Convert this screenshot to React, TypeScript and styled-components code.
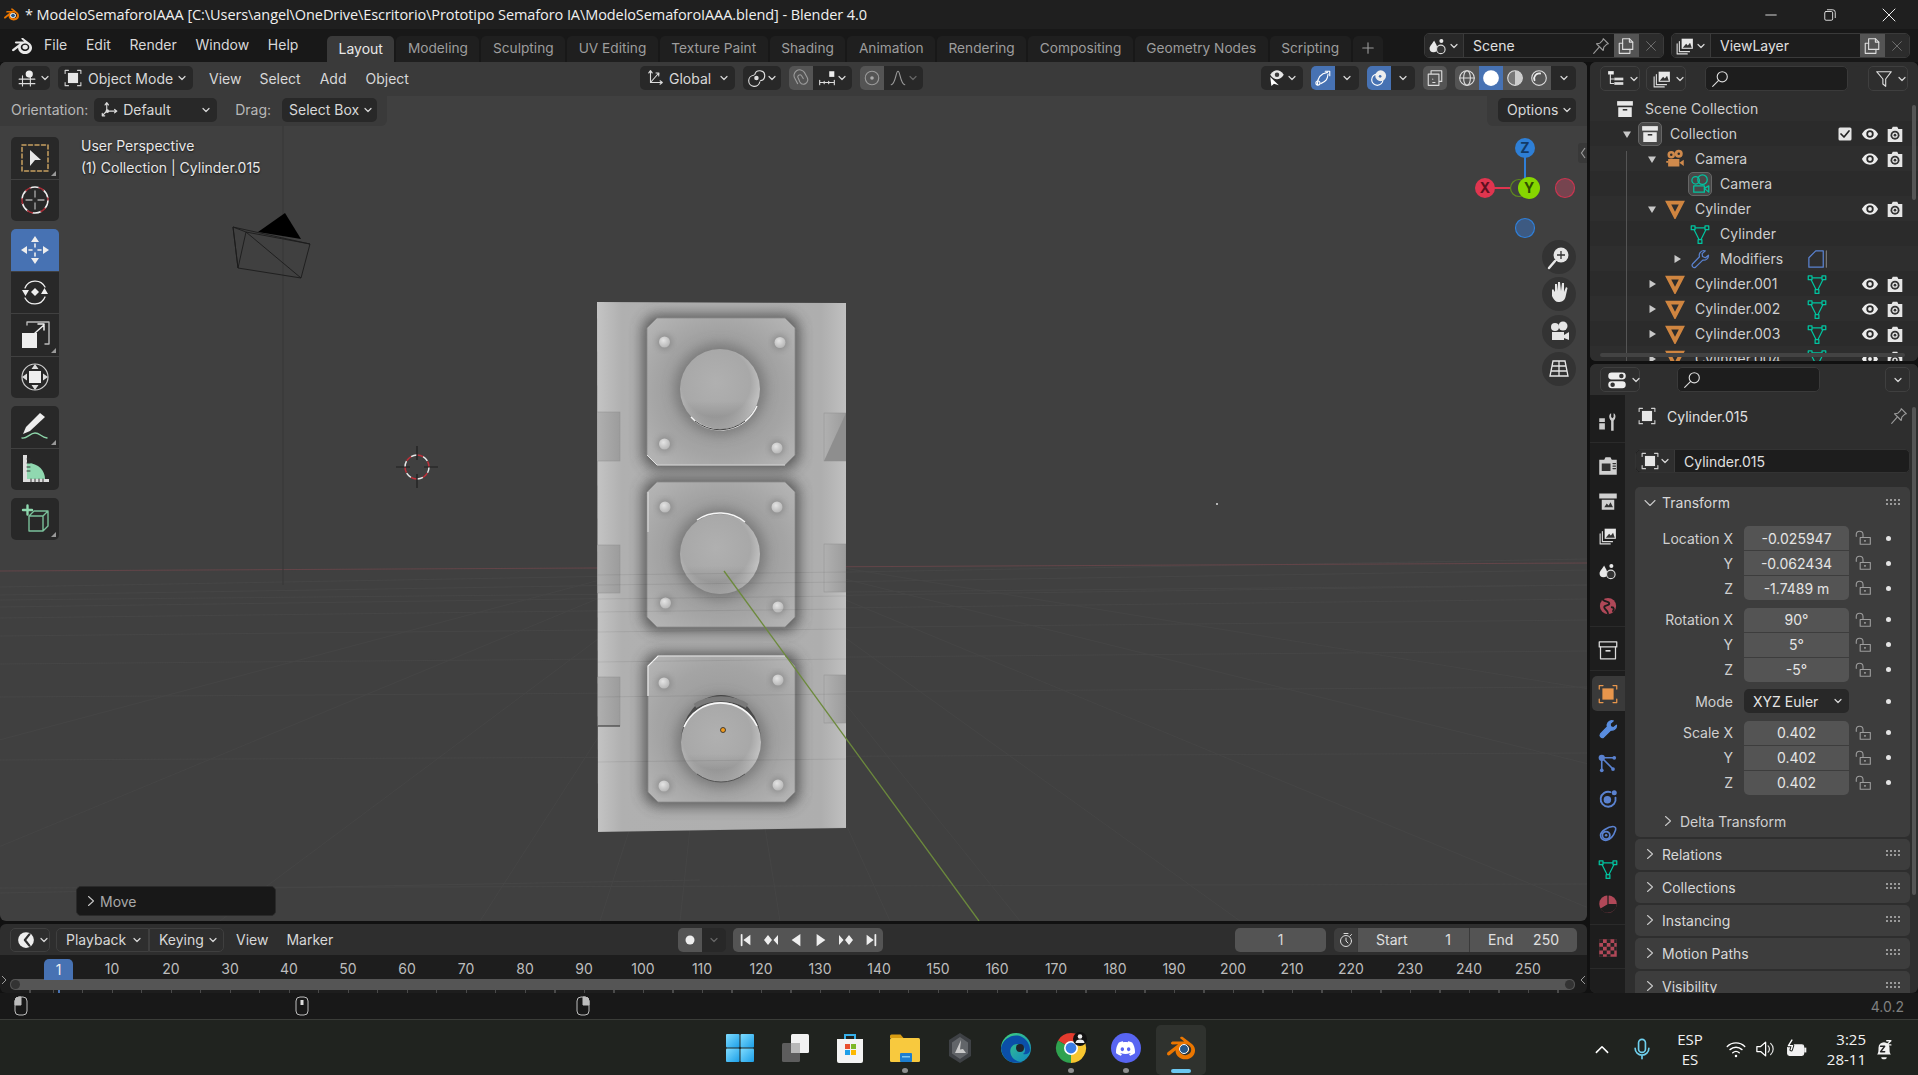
import React from "react";
import styled, { createGlobalStyle } from "styled-components";
import { SiBlender, SiDiscord } from "react-icons/si";

const Global = createGlobalStyle`
  html, body { margin: 0; padding: 0; background: #111; overflow: hidden; }
  body { font-family: Inter, "Noto Sans", sans-serif; }
  #root { width: 1918px; height: 1075px; }
  * { box-sizing: border-box; }
`;

const Page = styled.div`width:1918px;height:1075px;display:grid;grid-template-rows:29px 33px 931px 26px 1fr;background:#111;color:#d9d9d9;font-size:14px;overflow:hidden;`;

/* ---------- generic icon helper ---------- */
const Glyph = styled.svg`display:block;flex-shrink:0;`;
type GP = { s?: number; v?: string; children?: React.ReactNode };
const G = ({ s = 18, v = "0 0 16 16", children }: GP) => <Glyph width={s} height={s} viewBox={v} fill="none" stroke="#dcdcdc" strokeWidth="1" strokeLinecap="round" strokeLinejoin="round">{children}</Glyph>;
const Caret = ({ dim }: { dim?: boolean }) => <Glyph width="10" height="10" viewBox="0 0 10 10" fill="none" stroke={dim ? "#666" : "#d8d8d8"} strokeWidth="1.2" strokeLinecap="round" strokeLinejoin="round"><path d="M2 3.5 5 6.5 8 3.5" /></Glyph>;

const ObjIcon = ({ c = "#e6e6e6", s = 18 }: { c?: string; s?: number }) => <G s={s}><path d="M1 4V1.2h3M12 1.2h3V4M15 12v2.8h-3M4 14.800H1V12" stroke={c === "#e6e6e6" ? "#cfcfcf" : c} /><rect x="3.500" y="3.500" width="9" height="9" fill={c} stroke="none" /></G>;
const ViewEditor = () => <G><path d="M1 9h14M1 13h14M4 6v9M11 7v8" /><circle cx="10" cy="4.500" r="3.200" fill="#eee" stroke="none" /></G>;
const OrientIcon = () => <G><path d="M6 8V2M4.500 3.500 6 1.500 7.500 3.500M8 9h6M13 7.500 15 9l-2 1.500M5 10l-3 3M2 11v2.200h2.200" /><circle cx="6.500" cy="9" r="1.600" fill="#ddd" stroke="none" /></G>;
const GlobalIcon = () => <G><path d="M4 2v10h10M2.500 3.500 4 1.500l1.500 2M12.500 10.500 14.500 12l-2 1.500M4 12l7-8M9 3.500l2.500.2-.2 2.500" /></G>;
const PivotIcon = () => <G><path d="M5 5.500a5 5 0 1 0 5.500 6" /><path d="M6 5a4.500 4.500 0 1 1 5 5.500" /><circle cx="7.500" cy="8" r="2" fill="#ddd" stroke="none" /></G>;
const Magnet = () => <G><path d="M5 13 2.600 8.500A5 5 0 0 1 11 3l2.500 4.500c1 2 .5 4.500-1.500 5.500s-4 .3-5-1.500L5.500 8A1.800 1.800 0 0 1 8.500 6l1.500 2.500" stroke="#9a9a9a" /></G>;
const SnapInc = () => <G><path d="M1.500 10v4M1.500 12h13M14.500 10v4M5.500 11v2M9.500 11v2" /><rect x="10" y="2" width="4.500" height="5" fill="#eee" stroke="none" /></G>;
const PropDot = () => <G><circle cx="8" cy="8" r="6" stroke="#9a9a9a" /><circle cx="8" cy="8" r="1.600" fill="#aaa" stroke="none" /></G>;
const Falloff = () => <G><path d="M2 14C6 13 6 2 8 2s2 11 6 12" stroke="#9a9a9a" /></G>;
const VisIcon = () => <G><path d="M2 5c2-3 4-4 6-4s4 1 6 4c-2 3-4 4-6 4s-4-1-6-4z" fill="#e6e6e6" stroke="none" /><circle cx="8" cy="5" r="2" fill="#3a3a3a" stroke="none" /><path d="M2 7l1 8 2.300-2 4.300 1.500L5 10z" fill="#fff" stroke="none" /></G>;
const GizmoIcon = () => <G><path d="M3 14C3 8 6 4 12 3M6 13c5-2 6-4 6.500-8.500M10 2h4v4" stroke="#fff" /><circle cx="3.500" cy="12.500" r="1.800" stroke="#fff" /></G>;
const OverlayIcon = () => <G><circle cx="6.500" cy="9.500" r="5" stroke="#fff" /><circle cx="9.500" cy="6" r="4.800" fill="#eee" stroke="none" /><circle cx="9" cy="6.500" r="1.200" fill="#4772b3" stroke="none" /></G>;
const XrayIcon = () => <G><rect x="2" y="4.500" width="9.500" height="10" stroke="#ddd" /><path d="M4.500 4V1.500H14V11h-2" stroke="#ddd" /><path d="M6 9h.01M6 12h2" /></G>;
const ShadeWire = () => <G><circle cx="8" cy="8" r="6.500" /><ellipse cx="8" cy="8" rx="3" ry="6.500" /><path d="M1.500 8h13" /></G>;
const ShadeSolid = () => <G><circle cx="8" cy="8" r="7" fill="#fff" stroke="none" /></G>;
const ShadeMat = () => <G><circle cx="8" cy="8" r="6.500" fill="#777" /><path d="M8 1.500A6.500 6.500 0 0 1 8 14.500z" fill="#ccc" stroke="none" /></G>;
const ShadeRender = () => <G><circle cx="8" cy="8" r="6.500" fill="#555" /><path d="M4 10a4.500 4.500 0 0 1 5-6" stroke="#eee" strokeWidth="1.600" /></G>;
const OutlinerType = () => <G><rect x="1" y="1" width="5" height="3" fill="#eee" stroke="none" /><path d="M3 4v8M3 8h3M3 12h3" /><rect x="6.500" y="6.800" width="8" height="2.400" fill="#ddd" stroke="none" /><rect x="6.500" y="10.800" width="8" height="2.400" fill="#ddd" stroke="none" /></G>;
const LayerIcon = () => <G><path d="M1 6v9h9M3 4v9h9" /><rect x="5" y="1.500" width="10" height="9" fill="#e8e8e8" stroke="none" /><path d="M6 9.500 9 6l1.500 1.500L12.500 5 14 9.500z" fill="#333" stroke="none" /></G>;
const SearchIcon = () => <G><circle cx="10" cy="6" r="4.500" /><path d="M6.800 9.200 1.500 14.500" /></G>;
const FilterIcon = () => <G><path d="M1.500 1.500h13L9.500 8v6.500L7 12.500V8z" /></G>;
const SceneIcon = () => <G><path d="M4.500 3C6 6 7.500 8 7.500 10a3.500 3.500 0 0 1-7 0C.5 8 3 6 4.500 3z" fill="#e8e8e8" stroke="none" /><circle cx="10.500" cy="11" r="3.800" fill="#333" /><circle cx="11" cy="3.500" r="1.800" fill="#e8e8e8" stroke="none" /></G>;
const PinIcon = ({ s = 18 }: { s?: number }) => <G s={s}><path d="M10 1.500 14.500 6 13 6.500 10.500 9 10 12 4 6l3-.5L9.500 3zM6 9.500 1.500 14.500" stroke="#999" /></G>;
const CopyIcon = () => <G><path d="M2 5.500h3M2 5.500V14.500h9.500V11" stroke="#ddd" /><path d="M5 1.500h6l3 3v6.500H5z" stroke="#ddd" /><path d="M11 1.500v3h3" stroke="#ddd" /></G>;
const XIcon = () => <G s={14}><path d="M3 3l10 10M13 3 3 13" stroke="#777" /></G>;
const BoxIcon = ({ s = 18 }: { s?: number }) => <G s={s}><rect x="1" y="1" width="14" height="4" fill="#e8e8e8" stroke="none" /><path d="M2 6.500h12V15H2z" fill="#e8e8e8" stroke="none" /><rect x="6" y="8" width="4" height="1.400" fill="#333" stroke="none" /></G>;
const CamObj = ({ c = "#d08a4c" }: { c?: string }) => <G s={20}><circle cx="5" cy="4.500" r="3" fill={c} stroke="none" /><circle cx="11" cy="3.800" r="3.200" fill={c} stroke="none" /><circle cx="5" cy="4.500" r="1" fill="#2b2b2b" stroke="none" /><circle cx="11" cy="3.800" r="1" fill="#2b2b2b" stroke="none" /><rect x="2.500" y="8" width="9" height="6" fill={c} stroke="none" /><path d="M11.500 11 15 8.500v5zM1 9.500h1.500v1.500H1z" fill={c} stroke="none" /></G>;
const CamData = () => <G s={20}><g stroke="#00c4a0"><circle cx="4.500" cy="5" r="3" /><circle cx="10" cy="4.500" r="3.800" /><rect x="3" y="9.500" width="8.500" height="5" /><path d="M11.500 11.500 15 9.500v5z" /></g></G>;
const TriObj = ({ s = 20 }: { s?: number }) => <G s={s}><path d="M2.500 2.800h11L8 13.500z" stroke="#cf8540" strokeWidth="3" strokeLinejoin="miter" /></G>;
const MeshData = ({ s = 20 }: { s?: number }) => <G s={s}><g stroke="#00c4a0"><path d="M2.500 3h11L8 14z" /><rect x="1" y="1.500" width="3" height="3" fill="#2b2b2b" /><rect x="12" y="1.500" width="3" height="3" fill="#2b2b2b" /><rect x="6.500" y="12.500" width="3" height="3" fill="#2b2b2b" /></g></G>;
const Wrench = ({ c = "#5a82d0", s = 20, fill }: { c?: string; s?: number; fill?: boolean }) => <G s={s}><path d="M11 1.200a3.800 3.800 0 0 0-3.400 5L2 12a1.800 1.800 0 0 0 2.500 2.500l5.700-5.600A3.800 3.800 0 0 0 14.800 5L12.300 7 10 6l-.3-2.300 2.500-2.200A4 4 0 0 0 11 1.200z" stroke={c} fill={fill ? c : "none"} /></G>;
const ModPreview = () => <G s={20}><path d="M1.500 14.500V7L7 1.500h6v13z" stroke="#5a82d0" /><path d="M15.500 1.500v13" stroke="#777" /></G>;
const EyeIcon = () => <G s={18}><path d="M.800 8c2-3.800 4.500-5 7.200-5s5.200 1.200 7.200 5c-2 3.800-4.500 5-7.200 5S2.800 11.800.800 8z" fill="#ececec" stroke="none" /><circle cx="8" cy="8" r="3.300" fill="#2b2b2b" stroke="none" /><circle cx="8" cy="8" r="1.700" fill="#ececec" stroke="none" /></G>;
const RenderCam = () => <G s={18}><path d="M1.500 3.500h3.500L6 1.500h4l1 2h3.500V15h-13z" fill="#e6e6e6" stroke="none" /><circle cx="8" cy="9" r="4" fill="#333" stroke="none" /><circle cx="8" cy="9" r="2.400" fill="#e6e6e6" stroke="none" /><circle cx="8" cy="9" r="1.200" fill="#333" stroke="none" /></G>;
const CheckBox = () => <G s={16}><rect x="1.500" y="1.500" width="13" height="13" rx="1.500" fill="#e4e4e4" stroke="none" /><path d="M4 8l3 3 5-6" stroke="#222" strokeWidth="1.700" /></G>;
const Lock = () => <G s={18}><path d="M2 6.500V5a3 3 0 0 1 6 0v2.500" stroke="#9c9c9c" /><rect x="5.500" y="7.500" width="9" height="6" stroke="#9c9c9c" /><rect x="9" y="9.800" width="1.500" height="1.500" fill="#9c9c9c" stroke="none" /></G>;
const Arrow = ({ open }: { open?: boolean }) => <Glyph width="10" height="10" viewBox="0 0 10 10"><path d={open ? "M1 2.500h8L5 9z" : "M2.500 1 9 5l-6.500 4z"} fill="#c8c8c8" /></Glyph>;
const ChevR = () => <Glyph width="12" height="12" viewBox="0 0 12 12" fill="none" stroke="#c8c8c8" strokeWidth="1.100" strokeLinecap="round" strokeLinejoin="round"><path d="M3.500 1.500 8.500 6l-5 4.500" /></Glyph>;
const ChevD = () => <Glyph width="12" height="10" viewBox="0 0 12 10" fill="none" stroke="#c8c8c8" strokeWidth="1.100" strokeLinecap="round" strokeLinejoin="round"><path d="M1 2.500 6 7.500l5-5" /></Glyph>;
const Grip = () => <Glyph width="15" height="8" viewBox="0 0 15 8" fill="#9a9a9a"><path d="M0 0h2v2H0zM4 0h2v2H4zM8 0h2v2H8zM12 0h2v2h-2zM0 4h2v2H0zM4 4h2v2H4zM8 4h2v2H8zM12 4h2v2h-2z" /></Glyph>;

/* ---------- title + top bar ---------- */
const TitleBar = styled.div`background:#1f1f1f;display:flex;align-items:center;padding-left:4px;`;
const TitleText = styled.div`font-family:"Open Sans","Noto Sans",sans-serif;font-size:14.5px;letter-spacing:-.08px;color:#f0f0f0;margin-left:6px;white-space:nowrap;`;
const WinBtns = styled.div`margin-left:auto;display:flex;`;
const WinBtn = styled.div`width:59px;height:29px;display:flex;align-items:center;justify-content:center;`;
const LogoWrap = styled.div<{ $s: number }>`position:relative;width:${p => p.$s}px;height:${p => p.$s}px;`;
const LogoIris = styled.div<{ $s: number }>`position:absolute;left:${p => p.$s * .42}px;top:${p => p.$s * .37}px;width:${p => p.$s * .36}px;height:${p => p.$s * .36}px;border-radius:50%;background:#265787;border:${p => p.$s * .07}px solid #fff;`;
const LogoColor = ({ s = 16 }: { s?: number }) => <LogoWrap $s={s}><SiBlender size={s} color="#ea7600" /><LogoIris $s={s} /></LogoWrap>;

const TopBar = styled.div`background:#181818;display:flex;align-items:flex-start;padding-right:8px;`;
const TopLogo = styled.div`width:44px;height:33px;padding-left:12px;display:flex;align-items:center;`;
const Menus = styled.div`display:flex;gap:18.700px;height:33px;align-items:center;width:283px;color:#d8d8d8;padding-bottom:3px;`;
const Tabs = styled.div`display:flex;gap:2px;padding-top:7px;height:33px;align-items:stretch;white-space:nowrap;font-size:13.7px;`;
const Tab = styled.div<{ $on?: boolean; $icon?: boolean }>`padding:0 ${p => p.$icon ? 8 : 11.5}px 2px;display:flex;align-items:center;border-radius:5px 5px 0 0;background:${p => p.$on ? "#3a3a3a" : "#1f1f1f"};color:${p => p.$on ? "#e8e8e8" : "#9d9d9d"};font-size:${p => p.$on ? "14px" : "inherit"};`;
const Selector = styled.div<{ $w: number; $ml?: number; $auto?: boolean }>`width:${p => p.$w}px;margin-left:${p => p.$auto ? "auto" : (p.$ml ?? 0) + "px"};margin-top:4px;height:25px;display:flex;align-items:center;border:1px solid #3a3a3a;border-radius:5px;background:#1d1d1d;overflow:hidden;flex-shrink:0;`;
const SelHead = styled.div`width:39px;height:100%;background:#282828;border-right:1px solid #3a3a3a;display:flex;align-items:center;justify-content:center;gap:2px;`;
const SelName = styled.div`flex:1;padding:0 0 1px 9px;color:#e0e0e0;`;
const SelBtn = styled.div<{ $on?: boolean }>`width:24.500px;height:100%;display:flex;align-items:center;justify-content:center;background:${p => p.$on ? "#545454" : "#2c2c2c"};`;

/* ---------- main ---------- */
const Main = styled.div`display:grid;grid-template-columns:1587px 328px;column-gap:3px;min-height:0;`;
const LeftCol = styled.div`display:grid;grid-template-rows:859px 69px;row-gap:3px;min-height:0;`;
const RightCol = styled.div`display:grid;grid-template-rows:299px 629px;row-gap:3px;min-height:0;`;

const Viewport = styled.section`position:relative;background:#404040;border-radius:6px;overflow:hidden;`;
const Scene = styled.svg`position:absolute;left:0;top:0;`;
const VHeader = styled.div`position:relative;height:34px;background:#3a3a3a;display:grid;grid-template-columns:628px 1fr auto;align-items:center;padding:0 11px 2px 12px;`;
const Row = styled.div<{ $gap?: number; $ml?: number }>`display:flex;align-items:center;gap:${p => p.$gap ?? 0}px;margin-left:${p => p.$ml ?? 0}px;`;
const Drop = styled.div<{ $w?: number; $ml?: number; $h?: number; $r?: string; $pad?: number }>`height:${p => p.$h ?? 24}px;width:${p => p.$w ? p.$w + "px" : "auto"};margin-left:${p => p.$ml ?? 0}px;background:#282828;border-radius:${p => p.$r ?? "5px"};display:flex;align-items:center;justify-content:space-between;padding:0 6px 0 ${p => p.$pad ?? 6}px;gap:4px;color:#d8d8d8;white-space:nowrap;flex-shrink:0;`;
const OutlineDrop = styled(Drop)`background:transparent;border:1px solid #3f3f3f;`;
const TinyDrop = styled(OutlineDrop)`justify-content:center;padding:0;`;
const Seg = styled.div<{ $w: number; $on?: "blue" | "grey" | "dark" }>`width:${p => p.$w}px;height:24px;display:flex;align-items:center;justify-content:center;gap:1px;background:${p => p.$on === "blue" ? "#4772b3" : p.$on === "grey" ? "#545454" : "#282828"};&:first-child{border-radius:5px 0 0 5px;}&:last-child{border-radius:0 5px 5px 0;}&:only-child{border-radius:5px;}`;
const SegGroup = styled.div<{ $ml?: number }>`display:flex;margin-left:${p => p.$ml ?? 0}px;`;
const MenuText = styled.span<{ $ml?: number; $dim?: boolean }>`margin-left:${p => p.$ml ?? 0}px;color:${p => p.$dim ? "#b8b8b8" : "#d8d8d8"};`;
const ToolSettings = styled.div`position:relative;height:30px;display:flex;justify-content:space-between;`;
const ToolLeft = styled.div`width:387px;background:#3a3a3a;border-radius:0 0 6px 0;padding-left:11px;display:flex;align-items:center;padding-bottom:3px;color:#b8b8b8;`;
const ToolRight = styled.div`width:100px;background:#3a3a3a;border-radius:0 0 0 6px;display:flex;align-items:center;padding:0 10px 3px 11px;`;

const Toolbar = styled.div`position:absolute;left:11px;top:75px;width:48px;display:flex;flex-direction:column;gap:8px;`;
const ToolGroup = styled.div`display:flex;flex-direction:column;gap:1px;border-radius:5px;overflow:hidden;`;
const ToolBtn = styled.div<{ $on?: boolean; $corner?: boolean }>`position:relative;height:41.500px;display:flex;align-items:center;justify-content:center;background:${p => p.$on ? "#4772b3" : "#282828"};${p => p.$corner ? `&::after{content:"";position:absolute;right:3px;bottom:3px;border-left:5px solid transparent;border-bottom:5px solid #999;}` : ""}`;
const Info = styled.div`position:absolute;left:81px;top:73px;color:#e8e8e8;line-height:22px;text-shadow:0 1px 2px rgba(0,0,0,.7);font-size:14px;`;
const LastOp = styled.div`position:absolute;left:76px;top:824px;width:200px;height:30px;background:#181818;border-radius:5px;border:1px solid #2a2a2a;display:flex;align-items:center;gap:3px;padding-left:8px;color:#a8a8a8;`;

/* ---------- timeline ---------- */
const Timeline = styled.section`background:#1d1d1d;border-radius:6px;overflow:hidden;display:flex;flex-direction:column;position:relative;`;
const THeader = styled.div`height:31px;background:#2e2e2e;display:grid;grid-template-columns:668px 1fr auto;align-items:center;padding:0 10px;`;
const TBtnGroup = styled.div<{ $ml?: number }>`display:flex;margin-left:${p => p.$ml ?? 0}px;`;
const TBtn = styled.div<{ $w: number; $bg?: string }>`width:${p => p.$w}px;height:24px;background:${p => p.$bg ?? "#545454"};display:flex;align-items:center;justify-content:space-between;border-right:1px solid #3a3a3a;&:first-child{border-radius:5px 0 0 5px;}&:last-child{border-radius:0 5px 5px 0;border-right:none;}&:only-child{border-radius:5px;}`;
const Center = styled.div`width:100%;height:100%;display:flex;align-items:center;justify-content:center;`;
const Split = styled.div`width:100%;padding:0 18px;display:flex;justify-content:space-between;color:#e0e0e0;`;
const Ruler = styled.div`height:24px;display:flex;align-items:flex-end;padding-left:44px;position:relative;`;
const Pill = styled.div`width:29px;height:21px;background:#4772b3;border-radius:5px 5px 0 0;display:flex;align-items:center;justify-content:center;color:#f0f0f0;margin-right:9.500px;position:relative;z-index:1;top:1px;`;
const Num = styled.div`width:59px;text-align:center;height:21px;line-height:21px;color:#bdbdbd;flex-shrink:0;`;
const TScroll = styled.div`height:11px;margin:0 12px 0 10px;background:#555;border-radius:5px;position:relative;&::before,&::after{content:"";position:absolute;top:1px;width:9px;height:9px;border-radius:50%;background:#333;}&::before{left:1px;}&::after{right:1px;}`;
const ScrollTab = styled.div<{ $right?: boolean }>`position:absolute;${p => p.$right ? "right:0" : "left:1px"};top:50px;`;
const Ticks = styled.div`height:3px;position:relative;background:repeating-linear-gradient(90deg,#4a4a4a 0 1px,transparent 1px 29.500px);background-position:53px 0;`;
const PlayTick = styled.div`position:absolute;left:57.500px;top:0;width:2px;height:3px;background:#4772b3;`;

/* ---------- outliner ---------- */
const Outliner = styled.section`background:#2b2b2b;border-radius:6px;overflow:hidden;position:relative;`;
const OHeader = styled.div`height:34px;padding:4px 10px 0;display:flex;align-items:flex-start;background:#2e2e2e;`;
const SearchBox = styled.div<{ $w: number; $ml: number }>`width:${p => p.$w}px;margin-left:${p => p.$ml}px;height:25px;background:#1d1d1d;border:1px solid #3a3a3a;border-radius:5px;padding-left:5px;display:flex;align-items:center;flex-shrink:0;`;
const ORow = styled.div<{ $alt?: boolean; $d: number }>`height:25px;display:flex;align-items:center;padding-left:${p => 29 + 25 * p.$d}px;padding-right:11px;background:${p => p.$alt ? "#2b2b2b" : "#2e2e2e"};color:#cfcfcf;`;
const OArrow = styled.div`width:16px;display:flex;justify-content:center;flex-shrink:0;`;
const OIcon = styled.div<{ $ring?: boolean }>`width:24px;height:24px;margin:0 1px 0 3px;display:flex;align-items:center;justify-content:center;flex-shrink:0;border-radius:5px;${p => p.$ring ? "background:#484848;border:1px solid #666;" : ""}`;
const OName = styled.div`flex:1;margin-left:7px;white-space:nowrap;letter-spacing:.1px;`;
const OCell = styled.div<{ $w?: number }>`width:${p => p.$w ?? 25}px;display:flex;justify-content:center;align-items:center;flex-shrink:0;`;
const VLine = styled.div`position:absolute;left:36px;top:89px;width:1px;height:210px;background:#555;`;
const OScroll = styled.div`position:absolute;right:2px;top:43px;width:4px;height:95px;border-radius:2px;background:#555;`;
const HScroll = styled.div`position:absolute;left:10px;right:13px;bottom:4px;height:4px;border-radius:2px;background:#434343;`;

/* ---------- properties ---------- */
const Props = styled.section`background:#2e2e2e;border-radius:6px;overflow:hidden;display:grid;grid-template-rows:31px 1fr;grid-template-columns:35px 1fr;position:relative;`;
const PHeader = styled.div`grid-column:1 / 3;display:flex;padding:3px 8px 0 10px;background:#2e2e2e;`;
const PTabs = styled.div`background:#1d1d1d;padding-top:9px;display:flex;flex-direction:column;`;
const TabGroup = styled.div`display:flex;flex-direction:column;padding-bottom:3px;margin-bottom:5px;border-bottom:1px solid #2a2a2a;`;
const PTab = styled.div<{ $on?: boolean }>`height:35px;display:flex;align-items:center;justify-content:center;${p => p.$on ? "background:#3a3a3a;border-radius:5px 0 0 5px;margin-left:2px;padding-right:2px;" : ""}`;
const PBody = styled.div`padding:0 8px 0 10px;min-width:0;overflow:hidden;display:flex;flex-direction:column;`;
const PTitle = styled.div`height:42px;display:flex;align-items:center;padding:0 2px 0 3px;gap:11px;color:#e0e0e0;flex-shrink:0;`;
const PTitleName = styled.div`flex:1;`;
const NameField = styled.div`margin-top:12px;height:24px;background:#1d1d1d;border:1px solid #333;border-radius:5px;display:flex;align-items:center;flex-shrink:0;`;
const NameHead = styled.div`width:39px;height:100%;background:#2e2e2e;border-right:1px solid #3a3a3a;border-radius:5px 0 0 5px;display:flex;align-items:center;justify-content:center;gap:1px;`;
const NameText = styled.div`padding-left:9px;color:#e0e0e0;`;
const Panel = styled.div<{ $mt?: number }>`background:#3d3d3d;border-radius:5px;margin-top:${p => p.$mt ?? 2}px;flex-shrink:0;`;
const PanelHead = styled.div`height:31px;display:flex;align-items:center;padding:0 9px 0 9px;gap:6px;color:#d8d8d8;`;
const PanelName = styled.div`flex:1;`;
const Fields = styled.div`display:flex;flex-direction:column;gap:7.500px;padding-top:8px;`;
const FieldSet = styled.div`display:flex;flex-direction:column;gap:1px;`;
const FieldRow = styled.div`display:grid;grid-template-columns:98px 117px 29px 22px;align-items:center;height:24px;`;
const FLabel = styled.div`text-align:right;color:#d0d0d0;`;
const FVal = styled.div<{ $first?: boolean; $last?: boolean }>`margin-left:11px;width:105px;height:24px;background:#545454;color:#e4e4e4;display:flex;align-items:center;justify-content:center;border-radius:${p => p.$first ? "5px 5px 0 0" : p.$last ? "0 0 5px 5px" : "0"};`;
const FDrop = styled.div`margin-left:11px;width:105px;height:24px;background:#282828;color:#e4e4e4;border-radius:5px;display:flex;align-items:center;justify-content:space-between;padding:0 6px 0 9px;`;
const FLock = styled.div`margin-left:4px;display:flex;justify-content:flex-start;`;
const FDot = styled.div`margin-left:7px;width:5px;height:5px;border-radius:50%;background:#e4e4e4;`;
const Delta = styled.div`height:31px;margin-top:11px;padding-left:27px;display:flex;align-items:center;gap:6px;color:#d0d0d0;`;
const PScroll = styled.div`position:absolute;right:2px;top:43px;width:4px;height:488px;border-radius:2px;background:#555;`;

/* ---------- status + taskbar ---------- */
const Status = styled.div`background:#181818;display:flex;align-items:center;padding-left:14px;position:relative;`;
const MouseSlot = styled.div`width:281px;`;
const Version = styled.div`margin-left:auto;margin-right:14px;color:#808080;`;
const Taskbar = styled.div`background:#20231f;border-top:1px solid #3a3c38;display:flex;align-items:center;padding:2px 0 0 712px;height:56px;`;
const TaskTile = styled.div<{ $on?: boolean }>`position:relative;width:55.200px;height:50px;margin-top:3px;display:flex;align-items:center;justify-content:center;padding-bottom:4px;border-radius:5px;${p => p.$on ? "background:#2f322e;width:50px;margin-left:2.600px;" : ""}`;
const RunDot = styled.div`position:absolute;left:50%;bottom:2px;width:6px;height:5px;margin-left:-3px;border-radius:50%;background:#8f8f8f;`;
const RunBar = styled.div`position:absolute;left:50%;bottom:2px;width:20px;height:4px;margin-left:-10px;border-radius:2px;background:#6cc8f2;`;
const Tray = styled.div`margin-left:auto;display:flex;align-items:center;height:100%;color:#f2f2f2;`;
const TrayCell = styled.div<{ $w: number; $ml?: number }>`width:${p => p.$w}px;margin-left:${p => p.$ml ?? 0}px;display:flex;justify-content:center;align-items:center;`;
const TrayLines = styled.div<{ $align: string; $w: number }>`width:${p => p.$w}px;text-align:${p => p.$align};line-height:20px;font-size:15px;font-family:"Open Sans","Noto Sans",sans-serif;`;
const DiscordDisc = styled.div`width:30px;height:30px;border-radius:50%;background:#5865f2;display:flex;align-items:center;justify-content:center;`;

const MouseIcon = ({ part }: { part: "l" | "m" | "r" }) => <Glyph width="14" height="20" viewBox="0 0 14 20" fill="none" stroke="#bdbdbd"><rect x="1" y="1" width="12" height="18" rx="4" />{part === "l" && <path d="M1 9V5a4 4 0 0 1 4-4h2v8z" fill="#bdbdbd" />}{part === "r" && <path d="M13 9V5a4 4 0 0 0-4-4H7v8z" fill="#bdbdbd" />}{part === "m" && <rect x="5.500" y="4" width="3" height="5" fill="#ddd" stroke="none" />}</Glyph>;

/* ---------- 3D scene ---------- */
const chamfer = (x0: number, y0: number, x1: number, y1: number, c = 10) => `${x0 + c},${y0} ${x1 - c},${y0} ${x1},${y0 + c} ${x1},${y1 - c} ${x1 - c},${y1} ${x0 + c},${y1} ${x0},${y1 - c} ${x0},${y0 + c}`;
const panels = [
  { b: [647, 318, 795, 465], c: [720, 389], s: [[664.5, 342], [780, 342.5], [664.5, 444], [777, 448]] },
  { b: [647, 482, 795, 627], c: [720, 554], s: [[665, 507], [777, 507], [665.5, 603], [778, 607]] },
  { b: [648, 656, 795, 802], c: [721, 742], s: [[664, 683], [778, 680], [664, 786], [778, 785]] },
];
const outerPts = "597,302 846,303 846,828 598,832";
const vp = [720, 548];
const gridH = [573, 583, 597, 610, 630, 660, 695, 760, 890];

function Model() {
  return (
    <g>
      <defs>
        <clipPath id="oc"><polygon points={outerPts} /></clipPath>
        <filter id="b8" x="-30%" y="-30%" width="160%" height="160%"><feGaussianBlur stdDeviation="7" /></filter>
        <filter id="b3" x="-30%" y="-30%" width="160%" height="160%"><feGaussianBlur stdDeviation="3" /></filter>
        <linearGradient id="og" x1="0" x2="1" y1="0" y2="0"><stop offset="0" stopColor="#c4c4c4" /><stop offset=".1" stopColor="#b0b0b0" /><stop offset=".9" stopColor="#aeaeae" /><stop offset="1" stopColor="#c0c0c0" /></linearGradient>
        <radialGradient id="pg" cx=".5" cy=".5" r=".72"><stop offset="0" stopColor="#969696" /><stop offset=".6" stopColor="#a4a4a4" /><stop offset="1" stopColor="#b8b8b8" /></radialGradient>
        <linearGradient id="ng" x1="0" x2="1" y1="0" y2="0"><stop offset="0" stopColor="#b0b0b0" /><stop offset="1" stopColor="#9c9c9c" /></linearGradient>
        <radialGradient id="cg" cx=".45" cy=".42" r=".6"><stop offset="0" stopColor="#b0b0b0" /><stop offset=".72" stopColor="#a8a8a8" /><stop offset="1" stopColor="#c8c8c8" /></radialGradient>
        <linearGradient id="cs" x1="0" x2="0" y1="0" y2="1"><stop offset=".65" stopColor="#000" stopOpacity="0" /><stop offset="1" stopColor="#000" stopOpacity=".18" /></linearGradient>
        <radialGradient id="sg" cx=".4" cy=".35" r=".7"><stop offset="0" stopColor="#e4e4e4" /><stop offset="1" stopColor="#b4b4b4" /></radialGradient>
      </defs>
      <polygon points={outerPts} fill="url(#og)" />
      <g clipPath="url(#oc)">
        {panels.map((p, i) => <polygon key={i} points={chamfer(p.b[0] - 4, p.b[1] - 3, p.b[2] + 4, p.b[3] + 4, 10)} fill="#444" opacity=".85" filter="url(#b8)" />)}
        {[[597, 412, 620, 461], [597, 545, 620, 593], [597, 677, 620, 726], [824, 413, 846, 461], [824, 544, 846, 592], [824, 675, 846, 723]].map((n, i) => (
          <rect key={i} x={n[0]} y={n[1]} width={n[2] - n[0]} height={n[3] - n[1]} fill="url(#ng)" stroke="#8f8f8f" strokeWidth=".5" />
        ))}
        <polygon points="824,461 846,413 846,461" fill="#8e8e8e" />
        <path d="M597 726h23" stroke="#333" strokeWidth="1" />
      </g>
      {panels.map((p, i) => (
        <g key={i}>
          <polygon points={chamfer(p.b[0], p.b[1], p.b[2], p.b[3])} fill="url(#pg)" stroke="#8a8a8a" strokeWidth=".8" />
          {i === 0 && <path d={`M${p.b[0]} ${p.b[3] - 10}l10 10h${p.b[2] - p.b[0] - 20}`} stroke="#eee" strokeWidth="1" fill="none" opacity=".85" />}
          {i === 2 && <path d={`M${p.b[0]} ${p.b[1] + 40}V${p.b[1] + 10}l10-10H${p.b[2] - 10}`} stroke="#f4f4f4" strokeWidth="1.200" fill="none" />}
          {i === 1 && <path d={`M${p.b[0] + 1} ${p.b[1] + 50}V${p.b[1] + 10}`} stroke="#f0f0f0" strokeWidth="1" fill="none" opacity=".8" />}
          <circle cx={p.c[0]} cy={p.c[1]} r="45" fill="#505050" opacity=".5" filter="url(#b8)" />
          {p.s.map((s, j) => (
            <g key={j}>
              <circle cx={s[0]} cy={s[1]} r="7.500" fill="#666" opacity=".45" filter="url(#b3)" />
              <circle cx={s[0]} cy={s[1]} r="5.500" fill="url(#sg)" />
            </g>
          ))}
          {i === 2 && <path d="M681 742a40 47 0 0 1 80 0z" fill="#4a4a4a" />}
          {i === 2 && <path d="M695 706a40 30 0 0 1 52 0" stroke="#7a7a7a" strokeWidth="5" fill="none" />}
          <circle cx={p.c[0]} cy={p.c[1]} r="40" fill="url(#cg)" />
          <circle cx={p.c[0]} cy={p.c[1]} r="40" fill="url(#cs)" />
          {i === 0 && <path d="M691 417a40 40 0 0 0 66-11" stroke="#f6f6f6" strokeWidth="1.400" fill="none" />}
          {i === 0 && <path d="M695 421a40 40 0 0 0 50 0" stroke="#444" strokeWidth="1" fill="none" />}
          {i === 1 && <path d="M697 520a40 40 0 0 1 48 2" stroke="#f6f6f6" strokeWidth="1.400" fill="none" />}
          {i === 2 && <path d="M684 727a40 40 0 0 1 73-1" stroke="#f8f8f8" strokeWidth="1.600" fill="none" />}
          {i === 2 && <path d="M697 774a40 40 0 0 0 48 0" stroke="#555" strokeWidth="1" fill="none" />}
        </g>
      ))}
      <g clipPath="url(#oc)" stroke="#000" strokeOpacity=".09" strokeWidth=".8">
        {gridH.map((y, i) => <path key={i} d={`M597 ${y + 2}L846 ${y - 1}`} />)}
        <path d="M597 832l250-4" />
      </g>
      <circle cx="723" cy="730" r="2.500" fill="#f09a1e" stroke="#222" strokeWidth=".8" />
    </g>
  );
}

function Gizmo() {
  return (
    <g fontFamily="Inter, sans-serif" fontWeight="700" fontSize="14" textAnchor="middle">
      <circle cx="1525" cy="228" r="9.500" fill="#3d5a82" stroke="#2f7fd8" strokeWidth="1.200" />
      <path d="M1525 148v36" stroke="#2f7fd8" strokeWidth="2" />
      <path d="M1485 188h36" stroke="#e0354f" strokeWidth="2" />
      <circle cx="1565" cy="188" r="9.500" fill="#76444f" stroke="#c93550" strokeWidth="1.200" />
      <circle cx="1519" cy="188" r="8.500" fill="#404040" stroke="#5f8a1e" strokeWidth="1.200" />
      <circle cx="1525" cy="148" r="10" fill="#2e7fd6" />
      <text x="1525" y="153" fill="#123a66">Z</text>
      <circle cx="1485" cy="188" r="10" fill="#e0354f" />
      <text x="1485" y="193" fill="#5e1020">X</text>
      <circle cx="1529" cy="188" r="11" fill="#86d600" />
      <text x="1529" y="193" fill="#2f4d00">Y</text>
      {[257, 294, 332, 369].map(y => <circle key={y} cx="1559" cy={y} r="17" fill="#333" />)}
      <g fill="#e6e6e6" stroke="#e6e6e6">
        <circle cx="1561" cy="255" r="7.500" stroke="none" />
        <path d="M1555 261l-6 7" strokeWidth="2.500" strokeLinecap="round" />
        <path d="M1557 255h8M1561 251v8" stroke="#333" strokeWidth="1.300" />
        <path d="M1552 296v-6l1-1 2 3v-8h2l1 7v-9h2l1 9 1-8h2v9l2-5 1.500 1-2 9c-1 4-4 5-7 5s-4-2-5.500-4z" stroke="none" />
        <circle cx="1555" cy="327" r="4" stroke="none" /><circle cx="1563" cy="326" r="4.500" stroke="none" />
        <rect x="1552" y="332" width="12" height="8" stroke="none" /><path d="M1564 335l5-3v8l-5-2z" stroke="none" />
        <path d="M1553 361h12l3 15h-18zM1559 361v15M1551.500 366h15M1550.500 371h17" fill="none" strokeWidth="1.300" />
      </g>
    </g>
  );
}

function SceneArt() {
  const radials = [-1400, -900, -500, -240, -120, -40, 60, 170, 300, 520, 900, 1500, 2300];
  return (
    <Scene width="1587" height="859" viewBox="0 62 1587 859">
      <g stroke="#464646" strokeWidth="1">
        {gridH.map((y, i) => <path key={i} d={`M0 ${y + 14 - i * 2}L1587 ${y - 14 + i}`} />)}
        <path d="M0 893L700 880" /><path d="M0 600L1587 585" />
        {radials.map(r => <path key={r} d={`M${vp[0]} ${vp[1]}L${vp[0] + r} 921`} strokeOpacity=".8" />)}
      </g>
      <path d="M0 571L1587 563" stroke="#644549" strokeWidth="1" />
      <path d="M283 62V585" stroke="#363636" strokeWidth="1" />
      <polygon points="258,232 285,213 301,239" fill="#000" />
      <path d="M233 227l77 17-9 34-63-10zM233 227l5 41M233 227l13 5M246 232l-8 36M246 232l55 46M246 232l64 12" fill="none" stroke="#1c1c1c" strokeWidth=".9" />
      <Model />
      <path d="M724 571L979 921" stroke="#6c8a3c" strokeWidth="1.300" />
      <g fill="none" strokeWidth="1.500">
        <circle cx="417" cy="467" r="12" stroke="#e8e8e8" strokeDasharray="6 6.500" />
        <circle cx="417" cy="467" r="12" stroke="#c0303a" strokeDasharray="6 6.500" strokeDashoffset="6" />
        <path d="M417 446v14M417 474v14M396 467h14M424 467h14" stroke="#1f1f1f" strokeWidth="1.200" />
      </g>
      <circle cx="1217" cy="504" r="1" fill="#ddd" />
      <Gizmo />
      <path d="M1587 143h-6a3 3 0 0 0-3 3v14a3 3 0 0 0 3 3h6z" fill="#383838" />
      <path d="M1585 148l-3.500 5 3.500 5" stroke="#999" strokeWidth="1.200" fill="none" />
    </Scene>
  );
}

/* ---------- tool icons ---------- */
const T = ({ children }: { children: React.ReactNode }) => <G s={32} v="0 0 32 32">{children}</G>;
const ToolIcons: Record<string, React.ReactNode> = {
  select: <T><rect x="3" y="3" width="26" height="26" stroke="#c8a060" strokeWidth="1.500" strokeDasharray="4 2.500" /><path d="M11 8l11 10h-6l-5 6z" fill="#e8e8e8" stroke="none" /></T>,
  cursor: <T><circle cx="16" cy="16" r="13" stroke="#eee" strokeWidth="1.500" strokeDasharray="9 5" /><circle cx="16" cy="16" r="13" stroke="#a52c36" strokeWidth="1.500" strokeDasharray="5 9" strokeDashoffset="-9" /><path d="M16 7v6M16 19v6M7 16h6M19 16h6" stroke="#aaa" strokeWidth="1.300" /></T>,
  move: <T><path d="M16 2l4 6h-8zM16 30l-4-6h8zM2 16l6-4v8zM30 16l-6 4v-8z" fill="#eee" stroke="none" /><path d="M16 10v3M16 19v3M10 16h3M19 16h3" stroke="#eee" strokeWidth="1.600" /></T>,
  rotate: <T><path d="M6 12a11 11 0 0 1 20-1M26 21a11 11 0 0 1-20 1" stroke="#eee" strokeWidth="1.300" /><path d="M16 12l4 4-4 4-4-4zM3 14h7l-3.500 6zM22 18h7l-3.500-6z" fill="#eee" stroke="none" /></T>,
  scale: <T><path d="M8 6V3h22v22h-4" stroke="#bbb" strokeWidth="1.400" /><rect x="3" y="14" width="15" height="15" fill="#eee" stroke="none" /><path d="M16 14l9-8M19 5h6v6" stroke="#eee" strokeWidth="1.500" /></T>,
  transform: <T><rect x="10" y="10" width="12" height="12" fill="#eee" stroke="none" /><circle cx="16" cy="16" r="13" stroke="#ccc" strokeWidth="1.200" /><path d="M16 3l3.500 5h-7zM16 29l-3.500-5h7zM3 16l5-3.500v7zM29 16l-5 3.500v-7z" fill="#ddd" stroke="none" /></T>,
  annotate: <T><path d="M21 2l5 4-15 14-7 3 3-7z" fill="#eee" stroke="none" /><path d="M3 27c5 1 8-5 13-5s6 4 12 5" stroke="#8cd4a8" strokeWidth="1.400" /></T>,
  measure: <T><path d="M4 2h4v24h22v3H4z" fill="#ddd" stroke="none" /><path d="M8 10c12 0 18 8 18 16H8z" fill="#90d8b0" stroke="none" /><path d="M8 6h3M8 10h3M8 14h3M8 18h3M12 26v3M16 26v3M20 26v3M24 26v3" stroke="#333" strokeWidth="1" /></T>,
  add: <T><path d="M10 13h14v15H10zM10 13l5-5h14v15l-5 5M24 13l5-5" stroke="#7ac09a" strokeWidth="1.400" /><path d="M4 7h9M8.500 2.500v9" stroke="#8ed8ae" strokeWidth="2.400" /></T>,
};

const tabIcons: Record<string, React.ReactNode> = {
  tool: <G s={20}><path d="M3 1v5M5.500 8V5H1v3zM1 9h4.500v5H1zM12.500 1v3l-1 1-1-1V1C8.500 2 8.500 5 10.500 7v8h2V7c2-2 2-5 0-6z" fill="#ccc" stroke="none" /></G>,
  render: <G s={20}><path d="M1 3h4l1-2h4l1 2h4v12H1z" fill="#d0d0d0" stroke="none" /><rect x="3" y="6" width="7" height="6" fill="#333" stroke="none" /><path d="M12 6h2M12 8h2M12 10h2" stroke="#333" /></G>,
  output: <G s={20}><rect x="1" y="2" width="14" height="4" fill="#d0d0d0" stroke="none" /><path d="M3 7h10v8H3z" fill="#d0d0d0" stroke="none" /><path d="M5 13l2-3 1.500 1.500L10 9l2 4z" fill="#333" stroke="none" /></G>,
  view: <LayerIcon />,
  scene: <SceneIcon />,
  world: <G s={20}><circle cx="8" cy="8" r="6.500" fill="#b04858" stroke="none" /><path d="M4 3c2 2 5 1 5 3s-4 1-4 3 3 2 3 5M11 9c2 0 2 2 1 3" stroke="#1d1d1d" strokeWidth="1.500" /></G>,
  coll: <G s={20}><rect x="1" y="1.500" width="14" height="4" stroke="#ddd" /><path d="M2 5.500V15h12V5.500" stroke="#ddd" /><rect x="6" y="8" width="4" height="1.300" fill="#ddd" stroke="none" /></G>,
  object: <ObjIcon c="#e8964c" s={20} />,
  mod: <Wrench c="#5a8ee0" fill />,
  particles: <G s={20}><g stroke="#5a82d0" strokeWidth="1.300"><path d="M3 3v10M3 3l9 9M3 3h10" /></g><circle cx="3" cy="3" r="2.500" fill="#5a82d0" stroke="none" /><circle cx="3" cy="13" r="1.500" fill="#5a82d0" stroke="none" /><circle cx="12" cy="12" r="1.500" fill="#5a82d0" stroke="none" /><circle cx="13" cy="3" r="1.500" fill="#5a82d0" stroke="none" /></G>,
  physics: <G s={20}><path d="M10 2.500A6 6 0 1 0 14 7" stroke="#5a82d0" strokeWidth="1.500" /><circle cx="7.500" cy="8.500" r="3" fill="#5a82d0" stroke="none" /><circle cx="13" cy="3" r="2" fill="#5a82d0" stroke="none" /></G>,
  constraint: <G s={20}><path d="M2 9c0-3 6-7 10-7 2 0 2.500 1.500 2 3-1 3-3 7-7 8-3 .500-5-1.500-5-4z" stroke="#5a82d0" strokeWidth="1.300" /><circle cx="6.500" cy="9" r="3" stroke="#5a82d0" strokeWidth="1.400" /><circle cx="6.500" cy="9" r="1" fill="#5a82d0" stroke="none" /></G>,
  data: <MeshData />,
  material: <G s={20}><circle cx="8" cy="8" r="7" fill="#b04858" stroke="none" /><path d="M8 8h7A7 7 0 0 1 2 11.500z" fill="#1d1d1d" stroke="none" /><path d="M8 8V1" stroke="#1d1d1d" /></G>,
  texture: <G s={20}><rect x="1" y="1" width="14" height="14" fill="#b04858" stroke="none" /><path d="M1 1h3v3H1zM7 1h3v3H7zM13 1h2v3h-2zM4 4h3v3H4zM10 4h3v3h-3zM1 7h3v3H1zM7 7h3v3H7zM13 7h2v3h-2zM4 10h3v3H4zM10 10h3v3h-3zM1 13h3v2H1zM7 13h3v2H7z" fill="#222" stroke="none" /></G>,
};

/* ---------- data ---------- */
const tools = [
  [["select", true], ["cursor", false]],
  [["move", false, true], ["rotate", false], ["scale", true], ["transform", false]],
  [["annotate", true], ["measure", false]],
  [["add", true]],
] as [string, boolean, boolean?][][];

type ORowT = { n: string; d: number; a?: "o" | "c"; i: React.ReactNode; ring?: boolean; sub?: React.ReactNode; chk?: boolean; vis?: boolean };
const rows: ORowT[] = [
  { n: "Scene Collection", d: -1, i: <BoxIcon /> },
  { n: "Collection", d: 0, a: "o", i: <BoxIcon />, ring: true, chk: true, vis: true },
  { n: "Camera", d: 1, a: "o", i: <CamObj />, vis: true },
  { n: "Camera", d: 2, i: <CamData />, ring: true },
  { n: "Cylinder", d: 1, a: "o", i: <TriObj />, vis: true },
  { n: "Cylinder", d: 2, i: <MeshData /> },
  { n: "Modifiers", d: 2, a: "c", i: <Wrench />, sub: <ModPreview /> },
  { n: "Cylinder.001", d: 1, a: "c", i: <TriObj />, sub: <MeshData />, vis: true },
  { n: "Cylinder.002", d: 1, a: "c", i: <TriObj />, sub: <MeshData />, vis: true },
  { n: "Cylinder.003", d: 1, a: "c", i: <TriObj />, sub: <MeshData />, vis: true },
  { n: "Cylinder.004", d: 1, a: "c", i: <TriObj />, sub: <MeshData />, vis: true },
];

const tabGroups = [["tool"], ["render", "output", "view", "scene", "world"], ["coll"], ["object", "mod", "particles", "physics", "constraint", "data", "material"], ["texture"]];

const fieldSets: [string, string][][] = [
  [["Location X", "-0.025947"], ["Y", "-0.062434"], ["Z", "-1.7489 m"]],
  [["Rotation X", "90°"], ["Y", "5°"], ["Z", "-5°"]],
];
const scaleSet: [string, string][] = [["Scale X", "0.402"], ["Y", "0.402"], ["Z", "0.402"]];

const frames = Array.from({ length: 25 }, (_, i) => (i + 1) * 10);

function ValueSet({ items }: { items: [string, string][] }) {
  return (
    <FieldSet>
      {items.map(([l, v], i) => (
        <FieldRow key={i}>
          <FLabel>{l}</FLabel>
          <FVal $first={i === 0} $last={i === items.length - 1}>{v}</FVal>
          <FLock><Lock /></FLock>
          <FDot />
        </FieldRow>
      ))}
    </FieldSet>
  );
}

const Win = ({ children }: { children: React.ReactNode }) => <Glyph width="32" height="32" viewBox="0 0 32 32">{children}</Glyph>;

function TaskIcons() {
  return (
    <>
      <TaskTile><Win><defs><linearGradient id="w1" x1="0" y1="0" x2="1" y2="1"><stop offset="0" stopColor="#7fdcff" /><stop offset="1" stopColor="#1c9fe8" /></linearGradient></defs><g fill="url(#w1)"><rect x="2" y="2" width="13.500" height="13.500" rx="1" /><rect x="16.500" y="2" width="13.500" height="13.500" rx="1" /><rect x="2" y="16.500" width="13.500" height="13.500" rx="1" /><rect x="16.500" y="16.500" width="13.500" height="13.500" rx="1" /></g></Win></TaskTile>
      <TaskTile><Win><rect x="3" y="11" width="18" height="19" rx="1.500" fill="#5d5d5d" /><rect x="12" y="2" width="18" height="19" rx="1.500" fill="#f2f2f2" /><rect x="12" y="11" width="9" height="10" fill="#b8b8b8" /></Win></TaskTile>
      <TaskTile><Win><path d="M11 7V3h10v4" fill="none" stroke="#37b0ea" strokeWidth="2" /><path d="M3 7h26v22a2 2 0 0 1-2 2H5a2 2 0 0 1-2-2z" fill="#f3f3f3" /><rect x="11" y="12" width="5" height="5" fill="#e8502f" /><rect x="17" y="12" width="5" height="5" fill="#7db928" /><rect x="11" y="18" width="5" height="5" fill="#1f9fe8" /><rect x="17" y="18" width="5" height="5" fill="#fdb900" /></Win></TaskTile>
      <TaskTile><Win><path d="M1 4a1.500 1.500 0 0 1 1.500-1.500h9l3 3.500H1z" fill="#d89c12" /><rect x="1" y="6" width="30" height="24" rx="1.500" fill="#f8c93e" /><rect x="11" y="21" width="12" height="9" rx="1" fill="#1c7ed0" /><rect x="13" y="24" width="8" height="1.500" fill="#7fc8ef" /></Win><RunDot /></TaskTile>
      <TaskTile><Win><path d="M16 1l11 7v16l-11 7-11-7V8z" fill="#3e4145" /><path d="M16 5l8 5.500v11L16 27l-8-5.500v-11z" fill="#626569" /><path d="M17 8l-6 13h11l-3-4-3 .5z" fill="#c9c9c9" /></Win></TaskTile>
      <TaskTile><Win><defs><linearGradient id="e1" x1="0" y1="0" x2="1" y2="1"><stop offset="0" stopColor="#41d47a" /><stop offset="1" stopColor="#0f86c6" /></linearGradient></defs><circle cx="16" cy="16" r="15" fill="url(#e1)" /><path d="M1 16C3 6 14 1 22 5c7 4 8 10 8 13 0 3-3 5-7 4 3-2 3-7-2-9-6-3-13 2-10 10 2 5 7 7 12 7C12 33 2 28 1 16z" fill="#0b4fa8" /><circle cx="20" cy="16" r="4" fill="#20242a" /></Win></TaskTile>
      <TaskTile>
        <Win>
          <path d="M16 16 3 8.500A15 15 0 0 1 29 8.500z" fill="#e33b2e" />
          <path d="M16 16 29 8.500A15 15 0 0 1 16 31z" fill="#f8c62f" />
          <path d="M16 16 16 31A15 15 0 0 1 3 8.500z" fill="#2fa24f" />
          <circle cx="16" cy="16" r="7" fill="#fff" /><circle cx="16" cy="16" r="5.400" fill="#3b7de6" />
          <circle cx="25" cy="7" r="7" fill="#111" /><circle cx="25" cy="4.500" r="2.300" fill="#eee" /><path d="M20.500 11c0-2.500 2-3.500 4.500-3.500s4.500 1 4.500 3.500z" fill="#eee" />
        </Win><RunDot />
      </TaskTile>
      <TaskTile><DiscordDisc><SiDiscord size={19} color="#fff" /></DiscordDisc><RunDot /></TaskTile>
      <TaskTile $on><LogoColor s={28} /><RunBar /></TaskTile>
    </>
  );
}

export default function App() {
  return (
    <Page>
      <Global />
      <TitleBar>
        <LogoColor s={15} />
        <TitleText>* ModeloSemaforoIAAA [C:\Users\angel\OneDrive\Escritorio\Prototipo Semaforo IA\ModeloSemaforoIAAA.blend] - Blender 4.0</TitleText>
        <WinBtns>
          <WinBtn><G s={14}><path d="M2 8h12" stroke="#eee" /></G></WinBtn>
          <WinBtn><G s={14}><rect x="2" y="4" width="9" height="10" rx="1.500" stroke="#eee" /><path d="M5 2h6a3 3 0 0 1 3 3v6" stroke="#eee" /></G></WinBtn>
          <WinBtn><G s={16}><path d="M2 2l12 12M14 2 2 14" stroke="#eee" /></G></WinBtn>
        </WinBtns>
      </TitleBar>

      <TopBar>
        <TopLogo><SiBlender size={20} color="#e8e8e8" /></TopLogo>
        <Menus><span>File</span><span>Edit</span><span>Render</span><span>Window</span><span>Help</span></Menus>
        <Tabs>
          <Tab $on>Layout</Tab>
          {["Modeling", "Sculpting", "UV Editing", "Texture Paint", "Shading", "Animation", "Rendering", "Compositing", "Geometry Nodes", "Scripting"].map(t => <Tab key={t}>{t}</Tab>)}
          <Tab $icon><G s={14}><path d="M8 2v12M2 8h12" stroke="#999" strokeWidth="1.300" /></G></Tab>
        </Tabs>
        <Selector $w={240} $auto>
          <SelHead><SceneIcon /><Caret /></SelHead>
          <SelName>Scene</SelName>
          <OCell $w={26}><PinIcon /></OCell>
          <SelBtn $on><CopyIcon /></SelBtn>
          <SelBtn><XIcon /></SelBtn>
        </Selector>
        <Selector $w={239} $ml={7}>
          <SelHead><LayerIcon /><Caret /></SelHead>
          <SelName>ViewLayer</SelName>
          <SelBtn $on><CopyIcon /></SelBtn>
          <SelBtn><XIcon /></SelBtn>
        </Selector>
      </TopBar>

      <Main>
        <LeftCol>
          <Viewport>
            <SceneArt />
            <VHeader>
              <Row>
                <Drop $w={38}><ViewEditor /><Caret /></Drop>
                <Drop $w={135} $ml={8}><Row $gap={6}><ObjIcon /><span>Object Mode</span></Row><Caret /></Drop>
                <MenuText $ml={16}>View</MenuText><MenuText $ml={18}>Select</MenuText><MenuText $ml={19}>Add</MenuText><MenuText $ml={19}>Object</MenuText>
              </Row>
              <Row>
                <Drop $w={95}><Row $gap={5}><GlobalIcon /><span>Global</span></Row><Caret /></Drop>
                <SegGroup $ml={8}><Seg $w={38}><PivotIcon /><Caret /></Seg></SegGroup>
                <SegGroup $ml={8}><Seg $w={24} $on="grey"><Magnet /></Seg><Seg $w={39}><SnapInc /><Caret /></Seg></SegGroup>
                <SegGroup $ml={8}><Seg $w={24} $on="grey"><PropDot /></Seg><Seg $w={39}><Falloff /><Caret dim /></Seg></SegGroup>
              </Row>
              <Row>
                <SegGroup><Seg $w={42}><VisIcon /><Caret /></Seg></SegGroup>
                <SegGroup $ml={8}><Seg $w={24} $on="blue"><GizmoIcon /></Seg><Seg $w={24}><Caret /></Seg></SegGroup>
                <SegGroup $ml={8}><Seg $w={24} $on="blue"><OverlayIcon /></Seg><Seg $w={24}><Caret /></Seg></SegGroup>
                <SegGroup $ml={8}><Seg $w={24} $on="grey"><XrayIcon /></Seg></SegGroup>
                <SegGroup $ml={8}><Seg $w={24} $on="grey"><ShadeWire /></Seg><Seg $w={24} $on="blue"><ShadeSolid /></Seg><Seg $w={24} $on="grey"><ShadeMat /></Seg><Seg $w={24} $on="grey"><ShadeRender /></Seg><Seg $w={25}><Caret /></Seg></SegGroup>
              </Row>
            </VHeader>
            <ToolSettings>
              <ToolLeft>
                <span>Orientation:</span>
                <Drop $w={123} $ml={6}><Row $gap={5}><OrientIcon /><span>Default</span></Row><Caret /></Drop>
                <MenuText $ml={18} $dim>Drag:</MenuText>
                <Drop $w={95} $ml={11} $pad={7}><span>Select Box</span><Caret /></Drop>
              </ToolLeft>
              <ToolRight><Drop $w={78} $pad={9}><span>Options</span><Caret /></Drop></ToolRight>
            </ToolSettings>
            <Toolbar>
              {tools.map((g, i) => (
                <ToolGroup key={i}>
                  {g.map(([k, corner, on]) => <ToolBtn key={k} $on={on} $corner={corner}>{ToolIcons[k]}</ToolBtn>)}
                </ToolGroup>
              ))}
            </Toolbar>
            <Info>User Perspective<br />(1) Collection | Cylinder.015</Info>
            <LastOp><ChevR />Move</LastOp>
          </Viewport>

          <Timeline>
            <THeader>
              <Row>
                <OutlineDrop $w={40}><G s={18}><circle cx="8" cy="8" r="7" fill="#eee" stroke="none" /><path d="M11 3 7 8l4 5" stroke="#2e2e2e" strokeWidth="2" /></G><Caret /></OutlineDrop>
                <SegGroup $ml={6}>
                  <OutlineDrop $w={93} $r="5px 0 0 5px" $pad={9}><span>Playback</span><Caret /></OutlineDrop>
                  <OutlineDrop $w={75} $r="0 5px 5px 0" $pad={9}><span>Keying</span><Caret /></OutlineDrop>
                </SegGroup>
                <MenuText $ml={12}>View</MenuText><MenuText $ml={18}>Marker</MenuText>
              </Row>
              <Row>
                <SegGroup><Seg $w={24} $on="grey"><G s={12}><circle cx="8" cy="8" r="6" fill="#eee" stroke="none" /></G></Seg><Seg $w={24}><Caret dim /></Seg></SegGroup>
                <SegGroup $ml={7}>
                  <Seg $w={25} $on="grey"><G s={14}><path d="M3 2v12" stroke="#eee" strokeWidth="2" /><path d="M13 2v12L5 8z" fill="#eee" stroke="none" /></G></Seg>
                  <Seg $w={25} $on="grey"><G s={16}><path d="M5 3l4 5-4 5-4-5zM15 3v10L10.500 8z" fill="#eee" stroke="none" /></G></Seg>
                  <Seg $w={25} $on="grey"><G s={14}><path d="M13 1v14L3 8z" fill="#eee" stroke="none" /></G></Seg>
                  <Seg $w={25} $on="grey"><G s={14}><path d="M3 1v14l10-7z" fill="#eee" stroke="none" /></G></Seg>
                  <Seg $w={25} $on="grey"><G s={16}><path d="M11 3l4 5-4 5-4-5zM1 3v10L5.500 8z" fill="#eee" stroke="none" /></G></Seg>
                  <Seg $w={25} $on="grey"><G s={14}><path d="M13 2v12" stroke="#eee" strokeWidth="2" /><path d="M3 2v12l8-6z" fill="#eee" stroke="none" /></G></Seg>
                </SegGroup>
              </Row>
              <Row>
                <TBtnGroup>
                  <TBtn $w={91}><Center>1</Center></TBtn>
                </TBtnGroup>
                <TBtnGroup $ml={8}>
                  <TBtn $w={24} $bg="#3d3d3d"><Center><G s={16}><circle cx="8" cy="9" r="5.500" /><path d="M8 6v3l2 2M6 1.500h4M12 4l1.500-1.500" /></G></Center></TBtn>
                  <TBtn $w={112}><Split><span>Start</span><span>1</span></Split></TBtn>
                  <TBtn $w={107}><Split><span>End</span><span>250</span></Split></TBtn>
                </TBtnGroup>
              </Row>
            </THeader>
            <Ruler>
              <Pill>1</Pill>
              {frames.map(f => <Num key={f}>{f}</Num>)}
            </Ruler>
            <TScroll />
            <Ticks><PlayTick /></Ticks>
            <ScrollTab><Glyph width="7" height="12" viewBox="0 0 7 12" fill="none" stroke="#999"><path d="M1 2l4 4-4 4" /></Glyph></ScrollTab>
            <ScrollTab $right><Glyph width="7" height="12" viewBox="0 0 7 12" fill="none" stroke="#999"><path d="M5 2 1 6l4 4" /></Glyph></ScrollTab>
          </Timeline>
        </LeftCol>

        <RightCol>
          <Outliner>
            <OHeader>
              <OutlineDrop $w={40} $h={25}><OutlinerType /><Caret /></OutlineDrop>
              <OutlineDrop $w={40} $h={25} $ml={6}><LayerIcon /><Caret /></OutlineDrop>
              <SearchBox $w={143} $ml={19}><SearchIcon /></SearchBox>
              <OutlineDrop $w={40} $h={25} $ml={20}><FilterIcon /><Caret /></OutlineDrop>
            </OHeader>
            {rows.map((r, i) => (
              <ORow key={i} $alt={i % 2 === 1} $d={r.d}>
                <OArrow>{r.a && <Arrow open={r.a === "o"} />}</OArrow>
                <OIcon $ring={r.ring}>{r.i}</OIcon>
                <OName>{r.n}</OName>
                <OCell $w={30}>{r.sub}</OCell>
                <OCell>{r.chk && <CheckBox />}</OCell>
                <OCell>{r.vis && <EyeIcon />}</OCell>
                <OCell>{r.vis && <RenderCam />}</OCell>
              </ORow>
            ))}
            <VLine />
            <OScroll />
            <HScroll />
          </Outliner>

          <Props>
            <PHeader>
              <OutlineDrop $w={40} $h={25}><G s={20}><rect x="1" y="2" width="14" height="5.500" rx="2.700" fill="#eee" stroke="none" /><rect x="1" y="9" width="14" height="5.500" rx="2.700" fill="#eee" stroke="none" /><circle cx="11.500" cy="4.700" r="1.800" fill="#333" stroke="none" /><circle cx="4.500" cy="11.700" r="1.800" fill="#333" stroke="none" /></G><Caret /></OutlineDrop>
              <SearchBox $w={143} $ml={37}><SearchIcon /></SearchBox>
              <TinyDrop $w={25} $h={25} $ml={65}><Caret /></TinyDrop>
            </PHeader>
            <PTabs>
              {tabGroups.map((g, i) => (
                <TabGroup key={i}>
                  {g.map(k => <PTab key={k} $on={k === "object"}>{tabIcons[k]}</PTab>)}
                </TabGroup>
              ))}
            </PTabs>
            <PBody>
              <PTitle><ObjIcon s={18} /><PTitleName>Cylinder.015</PTitleName><PinIcon /></PTitle>
              <NameField>
                <NameHead><ObjIcon s={18} /><Caret /></NameHead>
                <NameText>Cylinder.015</NameText>
              </NameField>
              <Panel $mt={14}>
                <PanelHead><ChevD /><PanelName>Transform</PanelName><Grip /></PanelHead>
                <Fields>
                  {fieldSets.map((s, i) => <ValueSet key={i} items={s} />)}
                  <FieldRow>
                    <FLabel>Mode</FLabel>
                    <FDrop>XYZ Euler<Caret /></FDrop>
                    <span />
                    <FDot />
                  </FieldRow>
                  <ValueSet items={scaleSet} />
                </Fields>
                <Delta><ChevR />Delta Transform</Delta>
              </Panel>
              {["Relations", "Collections", "Instancing", "Motion Paths", "Visibility"].map(n => (
                <Panel key={n}><PanelHead><ChevR /><PanelName>{n}</PanelName><Grip /></PanelHead></Panel>
              ))}
            </PBody>
            <PScroll />
          </Props>
        </RightCol>
      </Main>

      <Status>
        <MouseSlot><MouseIcon part="l" /></MouseSlot>
        <MouseSlot><MouseIcon part="m" /></MouseSlot>
        <MouseSlot><MouseIcon part="r" /></MouseSlot>
        <Version>4.0.2</Version>
      </Status>

      <Taskbar>
        <TaskIcons />
        <Tray>
          <TrayCell $w={30}><G s={18}><path d="M3 11l5-5 5 5" stroke="#fff" strokeWidth="1.400" /></G></TrayCell>
          <TrayCell $w={50}><G s={22}><rect x="5.500" y="1" width="5" height="9.500" rx="2.500" stroke="#6fd0ee" strokeWidth="1.200" /><path d="M3 7.500a5 5 0 0 0 10 0M8 12.500V15" stroke="#6fd0ee" strokeWidth="1.200" /></G></TrayCell>
          <TrayLines $align="center" $w={46}>ESP<br />ES</TrayLines>
          <TrayCell $w={28} $ml={9}><G s={20}><path d="M1 6a10 10 0 0 1 14 0M3.200 8.500a7 7 0 0 1 9.600 0M5.400 11a4 4 0 0 1 5.200 0" stroke="#fff" strokeWidth="1.100" /><circle cx="8" cy="13.500" r="1" fill="#fff" stroke="none" /></G></TrayCell>
          <TrayCell $w={30}><G s={20}><path d="M1.500 6h3l4-3.500v11l-4-3.500h-3z" stroke="#fff" /><path d="M10.500 5.500a3.500 3.500 0 0 1 0 5M12.500 3.500a6 6 0 0 1 0 9" stroke="#ddd" /></G></TrayCell>
          <TrayCell $w={32}><G s={22}><rect x="2" y="5" width="11.500" height="7.500" rx="1.300" fill="#f2f2f2" stroke="#f2f2f2" /><rect x="14" y="7" width="1.500" height="3.500" fill="#f2f2f2" stroke="none" /><path d="M5 1.500 2.500 5.500h3l-1 3" stroke="#20231f" strokeWidth="2.500" /><path d="M5 1.500 2.500 5.500h3l-1 3" stroke="#fff" /></G></TrayCell>
          <TrayLines $align="right" $w={54}>3:25<br />28-11</TrayLines>
          <TrayCell $w={36}><G s={22}><path d="M3 12c1-1 1-3 1-5a4 4 0 0 1 8 0c0 2 0 4 1 5z" fill="#f2f2f2" stroke="none" /><path d="M6 14a2 1.500 0 0 0 4 0z" fill="#f2f2f2" stroke="none" /><path d="M5.500 6h3l-3 4h3" stroke="#222" strokeWidth="1" /><path d="M10 2h3l-3 3h3" stroke="#f2f2f2" strokeWidth="1" /></G></TrayCell>
          <TrayCell $w={16}><span /></TrayCell>
        </Tray>
      </Taskbar>
    </Page>
  );
}
